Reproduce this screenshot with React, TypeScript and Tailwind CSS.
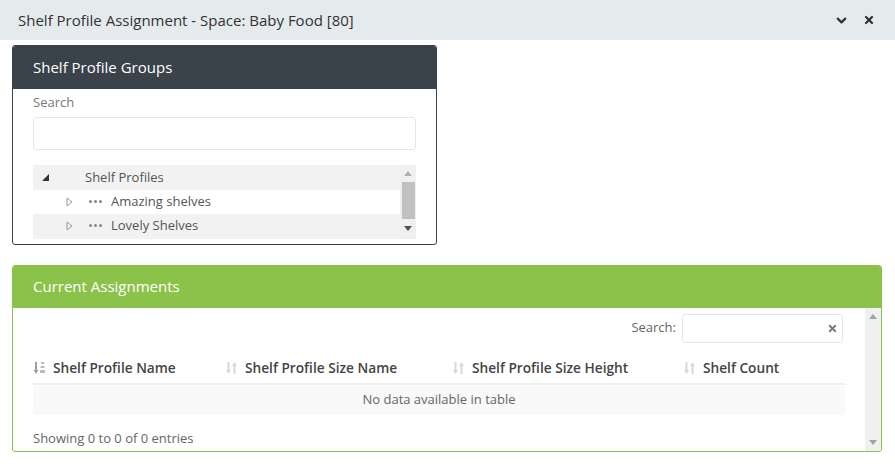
import { ChevronDown, X } from 'lucide-react';

const columns = [
  { name: 'Shelf Profile Name', width: 'w-[192px]', active: true },
  { name: 'Shelf Profile Size Name', width: 'w-[227px]', active: false },
  { name: 'Shelf Profile Size Height', width: 'w-[231px]', active: false },
  { name: 'Shelf Count', width: 'flex-1', active: false },
];

const SortIcon = ({ active }: { active: boolean }) => (
  <svg width="14" height="14" viewBox="0 0 14 14" className="shrink-0">
    {active ? (
      <>
        <path d="M3 1v9" stroke="#9aa0a6" strokeWidth="2" />
        <path d="M0.5 9l2.5 4 2.5-4z" fill="#9aa0a6" />
        <rect x="8" y="1" width="3" height="2" fill="#b8bcc0" />
        <rect x="7.5" y="5" width="4" height="2" fill="#b8bcc0" />
        <rect x="7" y="9" width="5" height="3" fill="#b8bcc0" />
      </>
    ) : (
      <>
        <path d="M3.5 1v9" stroke="#d6d8da" strokeWidth="2" />
        <path d="M1 9l2.5 4 2.5-4z" fill="#d6d8da" />
        <path d="M9.5 4v9" stroke="#d6d8da" strokeWidth="2" />
        <path d="M7 5l2.5-4 2.5 4z" fill="#d6d8da" />
      </>
    )}
  </svg>
);

const Dots = () => (
  <span className="flex gap-[2px] w-[14px] mr-[8px] ml-[1px] items-center">
    <span className="w-[3px] h-[3px] rounded-full bg-[#888]" />
    <span className="w-[3px] h-[3px] rounded-full bg-[#888]" />
    <span className="w-[3px] h-[3px] rounded-full bg-[#888]" />
  </span>
);

const Caret = () => (
  <svg width="8" height="10" viewBox="0 0 8 10" className="shrink-0">
    <path d="M1 1l5 4-5 4z" fill="none" stroke="#999" strokeWidth="1" />
  </svg>
);

export default function App() {
  return (
    <div className="w-[895px] h-[474px] bg-white text-[#333] font-['Open_Sans',sans-serif] overflow-hidden">
      <div className="h-[40px] bg-[#e5eaed] flex items-center pl-[18px] pr-[20px]">
        <span className="text-[15px] flex-1 text-[#333]">Shelf Profile Assignment - Space: Baby Food [80]</span>
        <ChevronDown size={15} strokeWidth={3.5} className="text-[#333] mr-[14px]" />
        <X size={12} strokeWidth={4.5} className="text-[#333]" />
      </div>

      <div className="px-[12px] pt-[5px]">
        <div className="w-[425px] border border-[#3a424a] rounded-[3px] overflow-hidden">
          <div className="h-[43px] bg-[#3a424a] flex items-center px-[20px] text-white text-[15px]">Shelf Profile Groups</div>
          <div className="px-[20px] pt-[4px] pb-[5px]">
            <div className="text-[13px] text-[#777] mb-[4px]">Search</div>
            <div className="h-[33px] border border-[#e6e6e6] rounded-[3px] mb-[15px]" />
            <div className="h-[74px] bg-[#f2f2f2] flex text-[13px] text-[#555]">
              <div className="flex-1 pt-[1px]">
                <div className="h-[24px] flex items-center pl-[9px]">
                  <svg width="7" height="7" viewBox="0 0 7 7" className="mr-[36px]"><path d="M7 0v7H0z" fill="#333" /></svg>
                  Shelf Profiles
                </div>
                <div className="h-[24px] flex items-center pl-[33px] bg-white">
                  <span className="mr-[14px]"><Caret /></span>
                  <Dots />
                  Amazing shelves
                </div>
                <div className="h-[24px] flex items-center pl-[33px]">
                  <span className="mr-[14px]"><Caret /></span>
                  <Dots />
                  Lovely Shelves
                </div>
              </div>
              <div className="w-[16px] flex flex-col items-center bg-[#f0f0f0]">
                <div className="h-[17px] flex items-center"><svg width="8" height="5"><path d="M0 5L4 0l4 5z" fill="#b0b0b0" /></svg></div>
                <div className="w-[13px] h-[37px] bg-[#c1c1c1]" />
                <div className="flex-1 flex items-center"><svg width="8" height="5"><path d="M0 0l4 5 4-5z" fill="#505050" /></svg></div>
              </div>
            </div>
          </div>
        </div>

        <div className="mt-[20px] w-[870px] h-[187px] border border-[#8bc34a] rounded-[3px] overflow-hidden flex flex-col">
          <div className="h-[42px] bg-[#8bc34a] flex items-center px-[20px] text-white text-[15px] shrink-0">Current Assignments</div>
          <div className="flex flex-1 min-h-0">
            <div className="flex-1 pl-[20px] pr-[20px] pt-[6px]">
              <div className="flex justify-end items-center gap-[6px] mr-[2px]">
                <span className="text-[13px] text-[#666]">Search:</span>
                <div className="w-[161px] h-[29px] border border-[#e6e6e6] rounded-[3px] flex items-center justify-end pr-[4px]">
                  <X size={11} strokeWidth={4} className="text-[#777]" />
                </div>
              </div>
              <div className="mt-[11px] h-[31px] flex items-center border-b-2 border-[#eee] text-[13.7px] font-semibold text-[#444]">
                {columns.map(c => (
                  <div key={c.name} className={`${c.width} flex items-center gap-[6px]`}>
                    <SortIcon active={c.active} />
                    {c.name}
                  </div>
                ))}
              </div>
              <div className="mt-[1px] h-[29px] bg-[#f9f9f9] flex items-center justify-center text-[13px] text-[#666]">No data available in table</div>
              <div className="mt-[14px] text-[13px] text-[#666]">Showing 0 to 0 of 0 entries</div>
            </div>
            <div className="w-[16px] bg-[#f0f0f0] flex flex-col items-center justify-between py-[6px]">
              <svg width="8" height="5"><path d="M0 5L4 0l4 5z" fill="#a3a3a3" /></svg>
              <svg width="8" height="5"><path d="M0 0l4 5 4-5z" fill="#a3a3a3" /></svg>
            </div>
          </div>
        </div>
      </div>
    </div>
  );
}
